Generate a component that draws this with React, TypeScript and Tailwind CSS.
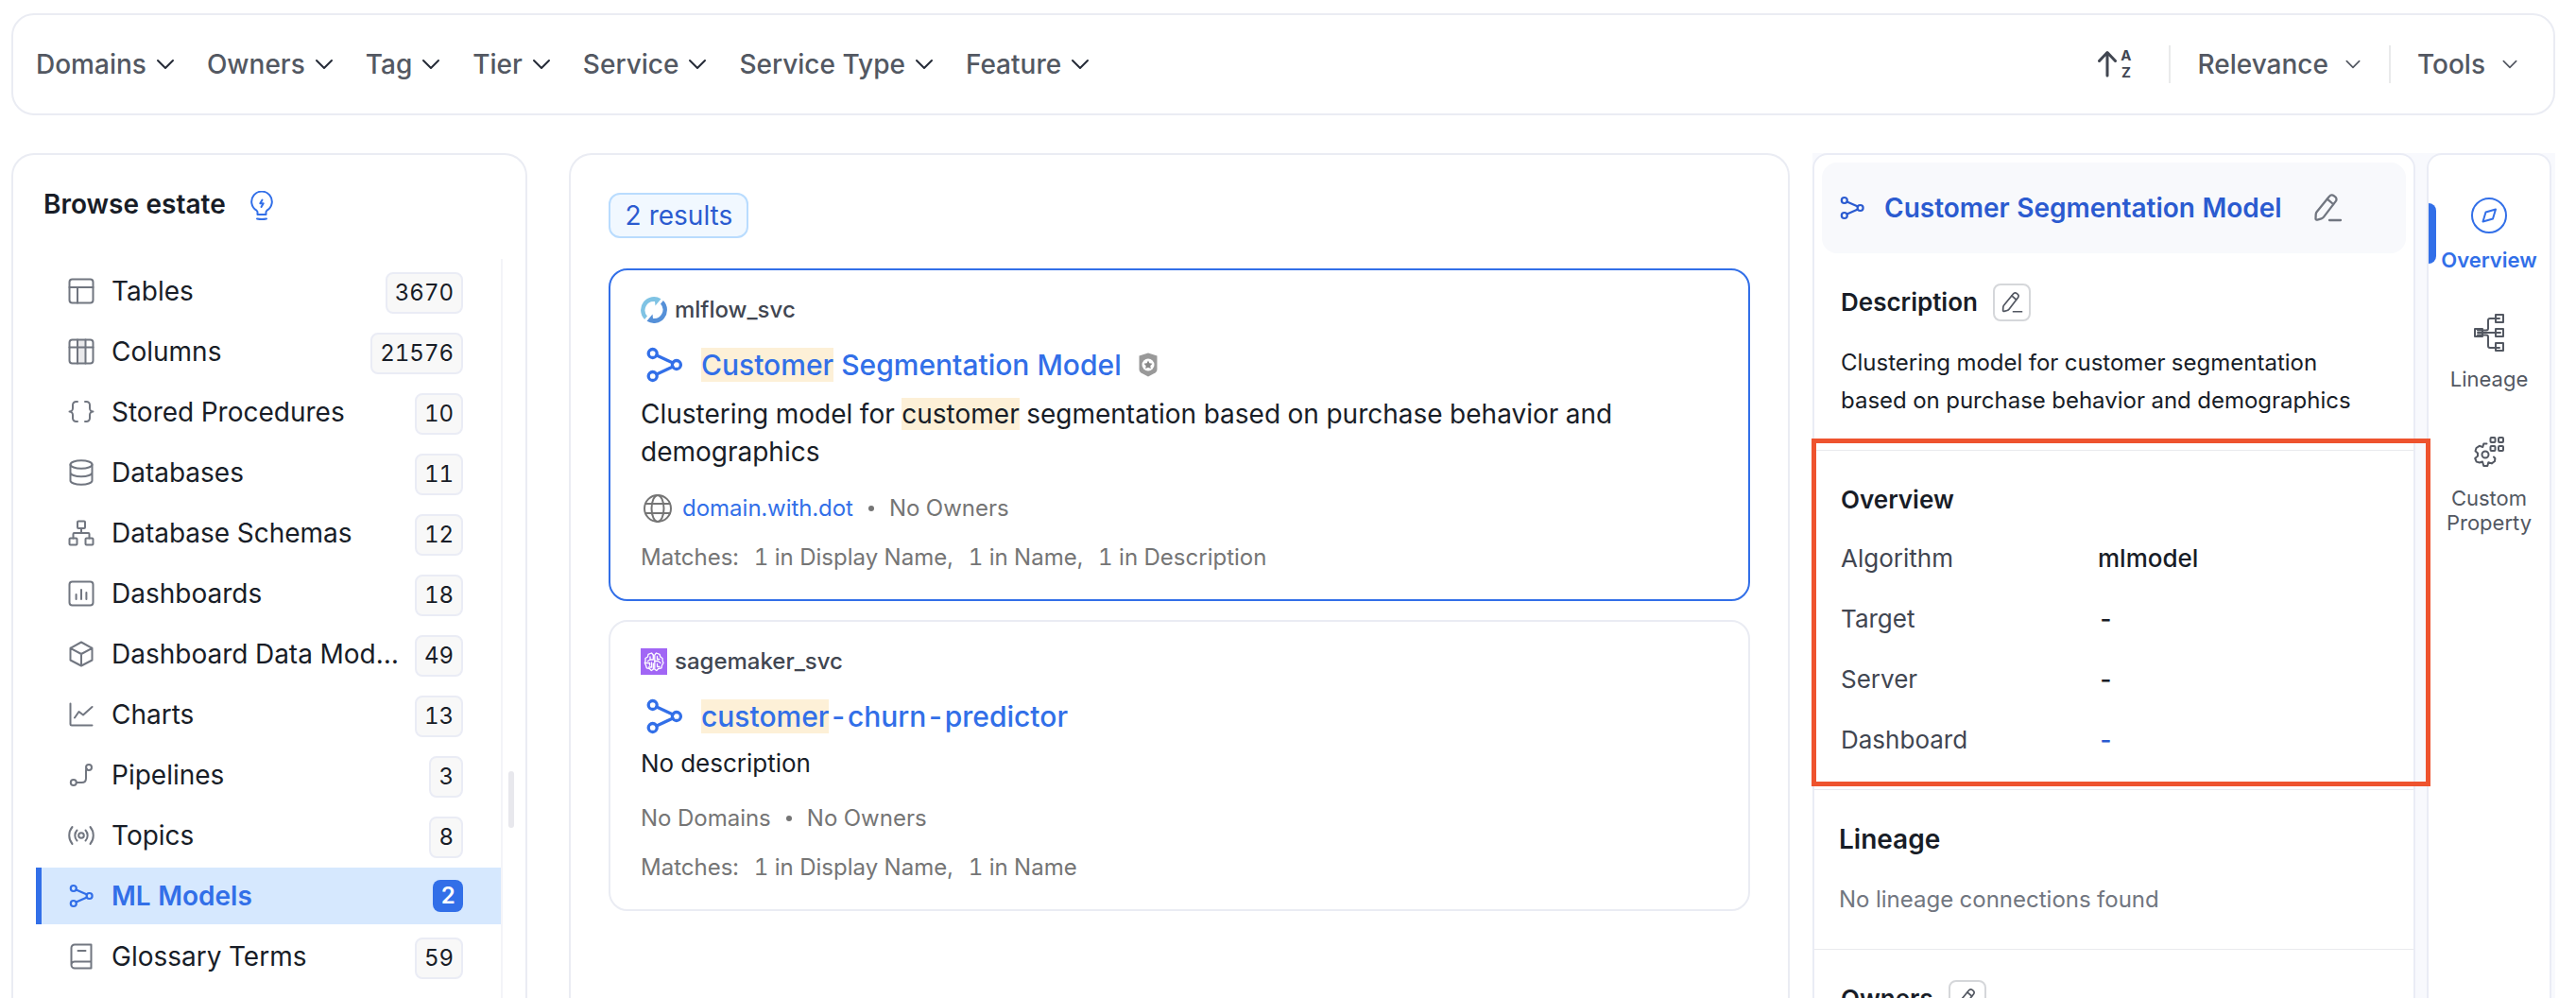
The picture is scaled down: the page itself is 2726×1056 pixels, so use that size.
import type { ReactNode } from "react";

type IconProps = { children: ReactNode; size?: string; viewBox?: string; stroke?: number };

function Icon({ children, size = "size-7", viewBox = "0 0 28 28", stroke = 2 }: IconProps) {
  return (
    <svg
      className={`${size} shrink-0`}
      viewBox={viewBox}
      fill="none"
      stroke="currentColor"
      strokeWidth={stroke}
      strokeLinecap="round"
      strokeLinejoin="round"
      aria-hidden="true"
    >
      {children}
    </svg>
  );
}

function MlModelIcon({ size = "size-7" }: { size?: string }) {
  return (
    <Icon size={size} stroke={2.2}>
      <circle cx="5.8" cy="6" r="3" />
      <circle cx="5.8" cy="22" r="3" />
      <circle cx="22.6" cy="14" r="3" />
      <path d="M8.6 7.4 20 12.6M8.6 20.6 20 15.4" />
    </Icon>
  );
}

function EditIcon({ size = "size-8" }: { size?: string }) {
  return (
    <Icon size={size} viewBox="0 0 32 32" stroke={2.3}>
      <path d="M18.2 3.6a3.2 3.2 0 0 1 4.5-.5l1.6 1.3a3.2 3.2 0 0 1 .5 4.5L12 25.6a5 5 0 0 1-2.5 1.7l-4.3 1.3a1.3 1.3 0 0 1-1.7-1.3l.2-4.5a5 5 0 0 1 1.1-2.8z" />
      <path d="m15.8 6.6 6.3 5.400M18 29h12" />
    </Icon>
  );
}

function Chevron({ small = false }: { small?: boolean }) {
  return (
    <Icon size={small ? "size-5" : "size-6"} viewBox="0 0 24 24">
      <path d="m4 8 8 8 8-8" />
    </Icon>
  );
}

const sideItems: { label: string; count: string; icon: ReactNode; active?: boolean }[] = [
  {
    label: "Tables",
    count: "3670",
    icon: (
      <Icon>
        <rect x="1.5" y="1.5" width="25" height="25" rx="3" />
        <path d="M1.5 10h25M10 10v16.5" />
      </Icon>
    ),
  },
  {
    label: "Columns",
    count: "21576",
    icon: (
      <Icon>
        <path d="M10 2h8.5v24H10z" fill="#e9e9eb" stroke="none" />
        <rect x="1.5" y="1.5" width="25" height="25" rx="3" />
        <path d="M1.5 9.5h25M10 1.5v25M18.5 1.5v25" />
      </Icon>
    ),
  },
  {
    label: "Stored Procedures",
    count: "10",
    icon: (
      <Icon>
        <path d="M10 3H8.5A3.5 3.5 0 0 0 5 6.5V10a3.5 3.5 0 0 1-3.5 3.5A3.5 3.5 0 0 1 5 17v3.5A3.5 3.5 0 0 0 8.5 24H10M18 3h1.5A3.5 3.5 0 0 1 23 6.5V10a3.5 3.5 0 0 0 3.5 3.5A3.5 3.5 0 0 0 23 17v3.5a3.5 3.5 0 0 1-3.5 3.5H18" />
      </Icon>
    ),
  },
  {
    label: "Databases",
    count: "11",
    icon: (
      <Icon>
        <ellipse cx="14" cy="5.5" rx="11.5" ry="4.3" />
        <path d="M2.5 5.5v17c0 2.4 5 4.3 11.5 4.3s11.5-1.9 11.5-4.3v-17M2.5 14c0 2.4 5 4.3 11.5 4.3s11.5-1.9 11.5-4.3" />
      </Icon>
    ),
  },
  {
    label: "Database Schemas",
    count: "12",
    icon: (
      <Icon>
        <rect x="10" y="1.5" width="8" height="7.5" rx="1" />
        <rect x="1.5" y="19.5" width="8" height="7" rx="1" />
        <rect x="18.5" y="19.5" width="8" height="7" rx="1" />
        <path d="M14 9v5M5.5 19.5V15q0-1 1-1h15q1 0 1 1v4.5" />
      </Icon>
    ),
  },
  {
    label: "Dashboards",
    count: "18",
    icon: (
      <Icon>
        <rect x="1.5" y="1.5" width="25" height="25" rx="3" />
        <path d="M8.6 15v5M14 10v10M19.4 13v7" />
      </Icon>
    ),
  },
  {
    label: "Dashboard Data Models",
    count: "49",
    icon: (
      <Icon>
        <path d="m14 1.5 11.5 6.3v12.7L14 26.5 2.5 20.5V7.8zM2.5 7.8 14 14l11.5-6.2M14 14v12.5" />
      </Icon>
    ),
  },
  {
    label: "Charts",
    count: "13",
    icon: (
      <Icon>
        <path d="M2.5 2.5v21.5q0 1.5 1.5 1.5h21.5M7 17.5l4.5-6.5 4.5 3.5L25.5 6" />
      </Icon>
    ),
  },
  {
    label: "Pipelines",
    count: "3",
    icon: (
      <Icon>
        <circle cx="5.8" cy="22" r="3" />
        <circle cx="22" cy="6" r="3" />
        <path d="M9 22h5.5q4.5 0 4.5-4.500V9q0-1.500 1-1.500" />
      </Icon>
    ),
  },
  {
    label: "Topics",
    count: "8",
    icon: (
      <Icon>
        <circle cx="14" cy="14" r="2.8" />
        <path d="M9.5 8.5a8 8 0 0 0 0 11M18.5 8.5a8 8 0 0 1 0 11M4.5 5a14 14 0 0 0 0 18M23.5 5a14 14 0 0 1 0 18" />
      </Icon>
    ),
  },
  { label: "ML Models", count: "2", icon: <MlModelIcon />, active: true },
  {
    label: "Glossary Terms",
    count: "59",
    icon: (
      <Icon>
        <path d="M24.5 1.5H7A3.5 3.5 0 0 0 3.5 5v18A3.5 3.5 0 0 0 7 26.500h17.500zM24.500 19.500H7A3.500 3.500 0 0 0 3.500 23M10.500 8h8" />
      </Icon>
    ),
  },
];

function FilterBar() {
  const filters = ["Domains", "Owners", "Tag", "Tier", "Service", "Service Type", "Feature"];
  return (
    <header className="flex h-27 shrink-0 items-center justify-between rounded-3xl border-2 border-[#eaecf3] pl-6 pr-9 font-medium text-[#535862]">
      <nav className="flex items-center gap-8" aria-label="Filters">
        {filters.map((name) => (
          <button key={name} type="button" className="flex items-center gap-2">
            {name}
            <span className="text-[#252b37]">
              <Chevron />
            </span>
          </button>
        ))}
      </nav>
      <div className="flex items-center">
        <button
          type="button"
          aria-label="Sort order"
          className="mr-10 flex items-center gap-1 text-[#414651]"
        >
          <svg className="h-8 w-5" viewBox="0 0 20 32" aria-hidden="true">
            <path
              d="M10 28V4M1.500 12.500l8.500-9 8.500 9"
              fill="none"
              stroke="currentColor"
              strokeWidth="3"
              strokeLinecap="round"
              strokeLinejoin="round"
            />
          </svg>
          <span className="flex flex-col text-[15px] leading-[18px] font-bold">
            <span>A</span>
            <span>Z</span>
          </span>
        </button>
        <span className="h-10 w-0.5 bg-[#e9eaeb]" />
        <button type="button" className="flex items-center gap-4 px-7">
          Relevance
          <Chevron small />
        </button>
        <span className="h-10 w-0.5 bg-[#e9eaeb]" />
        <button type="button" className="flex items-center gap-4 pl-7">
          Tools
          <Chevron small />
        </button>
      </div>
    </header>
  );
}

function Sidebar() {
  return (
    <aside className="flex w-[546px] shrink-0 flex-col rounded-t-3xl border-2 border-b-0 border-[#eaecf3] pl-6 pt-8">
      <div className="flex h-10 items-center gap-[26px] pl-2">
        <h2 className="font-semibold">Browse estate</h2>
        <button type="button" aria-label="Tips" className="mt-1 text-[#326fe8]">
          <Icon size="h-8 w-6" viewBox="0 0 24 32">
            <path d="M7.5 25v-2.5q0-1-1-1.8a10.800 10.800 0 1 1 11 0q-1 .8-1 1.800V25zM7 29.500q5 1 10 0" />
            <path d="m12.500 9.500-2.200 3.700h3.400l-2.200 3.700" />
          </Icon>
        </button>
      </div>
      <div className="mt-[38px] flex min-h-0 flex-1 items-center">
        <ul className="flex w-[494px] flex-col gap-1 self-stretch border-r-2 border-[#f3f4f8] pt-1">
          {sideItems.map((item) => (
            <li key={item.label}>
              <button
                type="button"
                className={
                  item.active
                    ? "flex h-15 w-full items-center gap-[18px] border-l-6 border-[#326fe8] bg-[#d6e8fe] pl-7 pr-10 text-left font-semibold text-[#326fe8]"
                    : "flex h-15 w-full items-center gap-[18px] pl-[34px] pr-10 text-left"
                }
              >
                <span className={item.active ? "" : "text-[#717680]"}>{item.icon}</span>
                <span className="-mr-1 min-w-0 flex-1 truncate">{item.label}</span>
                {item.active ? (
                  <span className="flex h-[34px] items-center rounded-lg bg-[#326fe8] px-2 text-[24px] text-white">
                    {item.count}
                  </span>
                ) : (
                  <span className="mt-1 flex h-11 items-center rounded-lg border-2 border-[#eaecf5] bg-[#f8f8f8] px-2 text-[24px]">
                    {item.count}
                  </span>
                )}
              </button>
            </li>
          ))}
        </ul>
        <span className="mb-45 ml-1.5 mt-auto h-15 w-1.5 rounded-full bg-[#e8e8ed]" />
      </div>
    </aside>
  );
}

function Mark({ children }: { children: ReactNode }) {
  return <mark className="bg-[#fdf0d7] text-inherit">{children}</mark>;
}

function MlflowLogo() {
  return (
    <svg className="size-7" viewBox="0 0 28 28" aria-hidden="true">
      <path
        d="M4.1 23.900A14 14 0 0 1 21.500 2.200L15.500 9.500 15 5A9.300 9.300 0 0 0 7 20.500z"
        fill="#7fc3e4"
      />
      <path
        d="M23.900 4.100A14 14 0 0 1 6.500 25.800L12.500 18.500 13 23A9.300 9.300 0 0 0 21 7.500z"
        fill="#5590d8"
      />
    </svg>
  );
}

function SagemakerLogo() {
  return (
    <svg className="size-7" viewBox="0 0 28 28" aria-hidden="true">
      <rect width="28" height="28" fill="#a166f5" />
      <g
        fill="none"
        stroke="#fff"
        strokeWidth="1.3"
        strokeLinecap="round"
        strokeLinejoin="round"
      >
        <path d="M13.300 7.200 11.500 5 8 6.300 7.500 9 5 10.500v3L4.300 15.500 5.500 18l.8 2.800 3 .7L11.300 23.500l2-1.300V16" />
        <path d="M14.800 7.200 16.500 5l3.500 1.300.8 2.700 2.200 1.500.2 3L24 15.500 22.500 18l-.5 2.800-3.200.7-2 2-2-1.300V7.200" />
        <path d="M13.300 7.200V12H10.500M10 9v3l-2.500 1.500M5.500 15.500H9.500V18M11.500 15v5H8.500" />
        <path d="M17.500 8.500v3H20M14.800 13.500H18.500L21 15.500M17.500 16.500V19.500H20" />
      </g>
    </svg>
  );
}

type ResultProps = {
  selected?: boolean;
  logo: ReactNode;
  service: string;
  title: ReactNode;
  badge?: ReactNode;
  description: ReactNode;
  domain: ReactNode;
  matches: string[];
};

function Result({ selected, logo, service, title, badge, description, domain, matches }: ResultProps) {
  return (
    <article
      className={
        selected
          ? "rounded-[20px] border-2 border-[#326fe8] px-8 py-7"
          : "rounded-[20px] border-2 border-[#eaecf3] px-8 py-7"
      }
    >
      <div className="flex h-7 items-center gap-2 text-[24px] font-medium text-[#414651]">
        {logo}
        {service}
      </div>
      <div className="mt-6 flex h-10 items-center gap-[18px] text-[30px] font-medium text-[#326fe8]">
        <span className="pl-1">
          <MlModelIcon size="size-[42px]" />
        </span>
        <a href="#model">{title}</a>
        {badge}
      </div>
      {description}
      <div className="mt-6 flex h-8 items-center gap-4 text-[24px] text-[#757575]">
        {domain}
        <span className="size-1.5 rounded-full bg-current" />
        <span>No Owners</span>
      </div>
      <div className="mt-5 flex h-8 items-center gap-4 text-[24px] text-[#757575]">
        <span>Matches:</span>
        {matches.map((m) => (
          <span key={m}>{m}</span>
        ))}
      </div>
    </article>
  );
}

function Results() {
  return (
    <main className="ml-11 flex min-w-0 flex-1 flex-col rounded-t-3xl border-2 border-b-0 border-[#eaecf3] px-10 pt-10">
      <span className="flex h-12 items-center self-start rounded-xl border-2 border-[#b9dcfe] bg-[#f1f8ff] px-[15px] text-[#2b5bd0]">
        2 results
      </span>
      <div className="mt-8 flex flex-col gap-5">
        <Result
          selected
          logo={<MlflowLogo />}
          service="mlflow_svc"
          title={
            <>
              <Mark>Customer</Mark> Segmentation Model
            </>
          }
          badge={
            <svg className="h-[26px] w-5" viewBox="0 0 20 26" aria-label="Certified">
              <path d="M10 .5 19.500 3.500V18q0 2-2 3.500L10 25.500l-7.500-4Q.5 20 .5 18V3.500z" fill="#999" />
              <circle cx="10" cy="13" r="6.500" fill="#fff" />
              <path d="m10 8.500 1.400 2.800 3.100.5-2.200 2.200.5 3.100-2.800-1.400-2.800 1.400.5-3.100-2.200-2.200 3.100-.5z" fill="#888" />
            </svg>
          }
          description={
            <p className="mt-3 leading-10">
              Clustering model for <Mark>customer</Mark> segmentation based on purchase behavior and
              demographics
            </p>
          }
          domain={
            <span className="flex items-center gap-2.5">
              <span className="pl-0.5">
                <Icon size="size-8" viewBox="0 0 32 32">
                  <circle cx="16" cy="16" r="14" />
                  <ellipse cx="16" cy="16" rx="6.500" ry="14" />
                  <path d="M3.500 11h25M3.500 21h25" />
                </Icon>
              </span>
              <a href="#domain" className="text-[#326fe8]">
                domain.with.dot
              </a>
            </span>
          }
          matches={["1 in Display Name,", "1 in Name,", "1 in Description"]}
        />
        <Result
          logo={<SagemakerLogo />}
          service="sagemaker_svc"
          title={
            <>
              <Mark>customer</Mark>-churn-predictor
            </>
          }
          description={<p className="mt-3 text-[26px] leading-9">No description</p>}
          domain={<span>No Domains</span>}
          matches={["1 in Display Name,", "1 in Name"]}
        />
      </div>
    </main>
  );
}

function EditButton({ label }: { label: string }) {
  return (
    <button
      type="button"
      aria-label={label}
      className="flex size-10 items-center justify-center rounded-lg border-2 border-[#d5d7da] text-[#535862]"
    >
      <EditIcon size="size-6" />
    </button>
  );
}

function Details() {
  const rows = [
    { name: "Algorithm", value: "mlmodel" },
    { name: "Target", value: "-" },
    { name: "Server", value: "-" },
    { name: "Dashboard", value: "-", link: true },
  ];
  return (
    <section className="flex w-[638px] shrink-0 flex-col rounded-t-2xl border-2 border-b-0 border-[#eaecf5] bg-white pt-2 text-[26px]">
      <div className="mx-2 flex h-24 shrink-0 items-center gap-5 rounded-2xl bg-[#f8f9fc] pl-[18px] text-[28px] font-semibold text-[#2b5bd0]">
        <MlModelIcon />
        <h2>Customer Segmentation Model</h2>
        <button type="button" aria-label="Edit name" className="ml-3 text-[#717680]">
          <EditIcon />
        </button>
      </div>
      <div className="shrink-0 border-b border-[#e9eaee] px-7 py-8">
        <div className="flex h-10 items-center gap-4">
          <h3 className="font-semibold">Description</h3>
          <EditButton label="Edit description" />
        </div>
        <p className="mt-6 text-[24px] leading-10">
          Clustering model for customer segmentation based on purchase behavior and demographics
        </p>
      </div>
      <div className="relative shrink-0 border-b border-[#e9eaee] px-7 py-8">
        <h3 className="leading-10 font-semibold">Overview</h3>
        <dl className="mt-[22px] flex flex-col gap-6 leading-10">
          {rows.map((row) => (
            <div key={row.name} className="flex">
              <dt className="w-[272px] text-[#414651]">{row.name}</dt>
              <dd className={row.link ? "font-medium text-[#2b5bd0]" : "font-medium"}>{row.value}</dd>
            </div>
          ))}
        </dl>
        <div className="pointer-events-none absolute -top-[13px] -right-[18px] bottom-[3px] -left-[3px] z-10 border-5 border-[#ee532e]" />
      </div>
      <div className="shrink-0 border-b border-[#e9eaee] px-[26px] py-8">
        <h3 className="text-[28px] leading-10 font-semibold">Lineage</h3>
        <p className="mt-6 text-[24px] leading-10 text-[#717680]">No lineage connections found</p>
      </div>
      <div className="flex shrink-0 items-center gap-4 px-7 py-8">
        <h3 className="font-semibold">Owners</h3>
        <EditButton label="Edit owners" />
      </div>
    </section>
  );
}

function Rail() {
  return (
    <nav
      aria-label="Detail tabs"
      className="relative flex w-33 shrink-0 flex-col items-center rounded-t-2xl border-2 border-b-0 border-[#eaecf5] bg-white pt-11 text-[22px] leading-[26px] text-[#535862]"
    >
      <span className="absolute top-[51px] left-0 h-16 w-2 rounded-r-lg bg-[#326fe8]" />
      <button type="button" className="flex flex-col items-center gap-[14px] font-semibold text-[#326fe8]">
        <Icon size="size-10" viewBox="0 0 40 40">
          <circle cx="20" cy="20" r="18" />
          <path d="m27 13.500-3 10-10.500 3 3-10z" />
        </Icon>
        Overview
      </button>
      <button type="button" className="mt-11 flex flex-col items-center gap-4">
        <Icon size="h-10 w-8" viewBox="0 0 32 40">
          <path d="M1 16h8v8H1zM23 1h8v8h-8zM23 16h8v8h-8zM23 31h8v8h-8zM4 20h24M4 17.500h9q2 0 2-2V7q0-2 2-2h10M4 22.500h9q2 0 2 2V34q0 2 2 2h10" />
        </Icon>
        Lineage
      </button>
      <button type="button" className="mt-12 flex flex-col items-center gap-5">
        <Icon size="size-8" viewBox="0 0 32 32">
          <rect x="17.500" y="1" width="5" height="5" rx="1" />
          <rect x="26" y="1" width="5" height="5" rx="1" />
          <rect x="17.500" y="10" width="5" height="5" rx="1" />
          <rect x="26" y="10" width="5" height="5" rx="1" />
          <circle cx="12" cy="19" r="3.500" />
          <path d="M13.500 7.500h-3.200l-1 3.600-3.500-1.300-3.300 2.200-1 3.300 2.500 2.200v3L1.200 23l1.500 3.600 3.300.9 3-1 1.300 4.500h4l1-3.800 3.500 1.200 3.200-2.400.4-3-1.400-1.500" />
        </Icon>
        <span>
          Custom
          <br />
          Property
        </span>
      </button>
    </nav>
  );
}

export default function App() {
  return (
    <div className="flex h-screen flex-col gap-10 overflow-hidden bg-white pt-3.5 pr-[22px] pl-3 font-['Inter',sans-serif] text-[28px] leading-8 text-[#181d27] tabular-nums antialiased">
      <FilterBar />
      <div className="flex min-h-0 flex-1">
        <Sidebar />
        <Results />
        <div className="ml-6 flex shrink-0 gap-3 bg-[#f8f9fd] pr-1">
          <Details />
          <Rail />
        </div>
      </div>
    </div>
  );
}
